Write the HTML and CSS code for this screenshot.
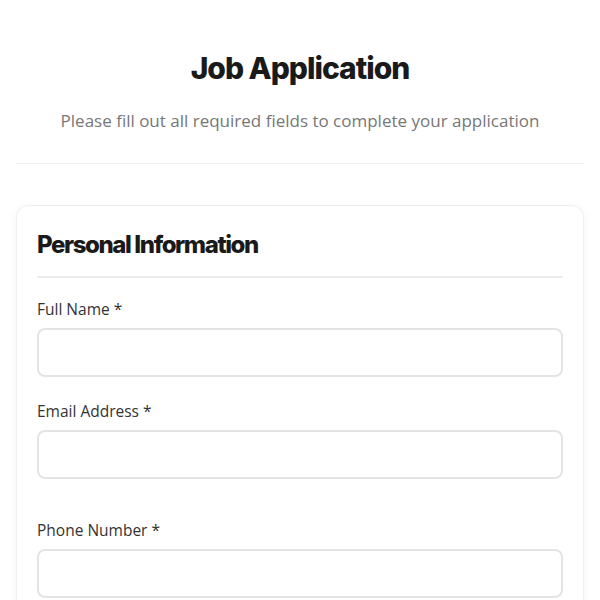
FILE: index.html
```html
<!DOCTYPE html>
<html lang="en">
<head>
<meta charset="utf-8">
<title>Job Application</title>
<link rel="stylesheet" href="styles.css">
</head>
<body>
<header class="page-header">
  <h1 class="title">Job Application</h1>
  <p class="subtitle">Please fill out all required fields to complete your application</p>
</header>
<main class="card">
  <h2 class="section-title">Personal Information</h2>
  <div class="field">
    <label class="label" for="name">Full Name *</label>
    <input class="input" id="name" type="text">
  </div>
  <div class="field">
    <label class="label" for="email">Email Address *</label>
    <input class="input" id="email" type="email">
    <div class="hint"></div>
  </div>
  <div class="field">
    <label class="label" for="phone">Phone Number *</label>
    <input class="input" id="phone" type="tel">
  </div>
</main>
</body>
</html>
```
FILE: styles.css
```css
* { box-sizing: border-box; }
html, body { margin: 0; padding: 0; background: #ffffff; }
body {
  font-family: "Open Sans", "Noto Sans", sans-serif;
  color: #333333;
}
.page-header {
  margin: 0 16px;
  padding: 50px 0 29px;
  text-align: center;
  border-bottom: 1px solid #f1f1f1;
}
.title {
  margin: 0;
  font-family: Inter, "Noto Sans", sans-serif;
  font-weight: 800;
  font-size: 30px;
  line-height: 36px;
  letter-spacing: -1px;
  color: #1a1a1a;
}
.subtitle {
  margin: 21px 0 0;
  font-size: 17px;
  line-height: 27px;
  font-weight: 400;
  color: #777777;
}
.card {
  margin: 41px 16px 0;
  padding: 24px 20px 20px;
  border: 1px solid #efefef;
  border-radius: 12px;
  box-shadow: 0 2px 8px rgba(0, 0, 0, 0.05);
}
.section-title {
  margin: 0 0 20px;
  font-family: Inter, "Noto Sans", sans-serif;
  font-weight: 800;
  font-size: 24px;
  line-height: 29px;
  letter-spacing: -1.4px;
  color: #1a1a1a;
}
.section-title::after {
  content: "";
  display: block;
  height: 2px;
  background: #ececec;
  margin-top: 17px;
}
.field {
  display: flex;
  flex-direction: column;
}
.field + .field { margin-top: 23px; }
.label {
  font-size: 15.5px;
  line-height: 22px;
  color: #333333;
  margin-bottom: 8px;
}
.input {
  height: 49px;
  border: 2px solid #e4e4e4;
  border-radius: 8px;
  background: #ffffff;
  font-family: inherit;
  font-size: 15px;
  padding: 0 14px;
  outline: none;
}
.hint {
  height: 17px;
}
```
